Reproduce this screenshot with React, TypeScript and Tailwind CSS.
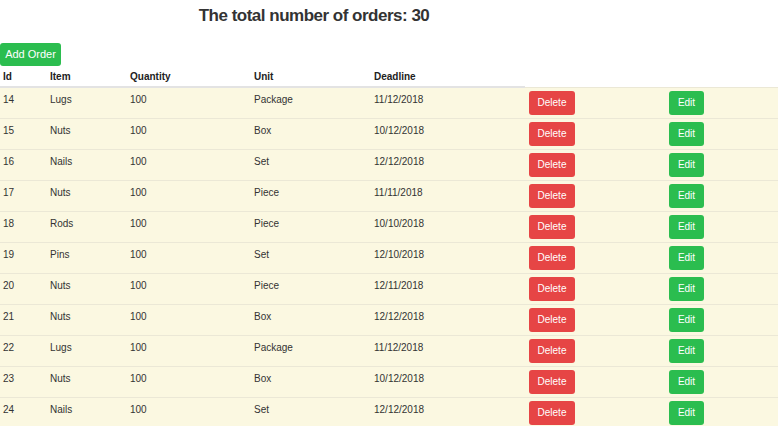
import React from "react";

const orders = [
  { id: 14, item: "Lugs", qty: 100, unit: "Package", deadline: "11/12/2018" },
  { id: 15, item: "Nuts", qty: 100, unit: "Box", deadline: "10/12/2018" },
  { id: 16, item: "Nails", qty: 100, unit: "Set", deadline: "12/12/2018" },
  { id: 17, item: "Nuts", qty: 100, unit: "Piece", deadline: "11/11/2018" },
  { id: 18, item: "Rods", qty: 100, unit: "Piece", deadline: "10/10/2018" },
  { id: 19, item: "Pins", qty: 100, unit: "Set", deadline: "12/10/2018" },
  { id: 20, item: "Nuts", qty: 100, unit: "Piece", deadline: "12/11/2018" },
  { id: 21, item: "Nuts", qty: 100, unit: "Box", deadline: "12/12/2018" },
  { id: 22, item: "Lugs", qty: 100, unit: "Package", deadline: "11/12/2018" },
  { id: 23, item: "Nuts", qty: 100, unit: "Box", deadline: "10/12/2018" },
  { id: 24, item: "Nails", qty: 100, unit: "Set", deadline: "12/12/2018" },
];

export default function App() {
  return (
    <div className="min-h-screen w-[778px] overflow-hidden bg-white font-['Liberation_Sans',Arial,sans-serif] text-[#333]">
      <div className="flex w-[628px] justify-center pt-[5px]">
        <h1 className="text-[17px] leading-[22px] font-bold tracking-[-0.5px] text-[#333]">
          The total number of orders: 30
        </h1>
      </div>

      <button className="mt-[16px] block h-[23px] w-[61px] rounded-[3px] bg-[#2bbd4f] text-[11px] text-white">
        Add Order
      </button>

      <table className="w-[778px] table-fixed border-collapse text-[10px]">
        <colgroup>
          <col className="w-[47px]" />
          <col className="w-[80px]" />
          <col className="w-[124px]" />
          <col className="w-[120px]" />
          <col className="w-[154px]" />
          <col className="w-[140px]" />
          <col />
        </colgroup>
        <thead>
          <tr>
            {["Id", "Item", "Quantity", "Unit", "Deadline"].map((h) => (
              <th
                key={h}
                className="h-[21px] border-b-2 border-[#e3e3e3] pl-[3px] text-left align-middle font-bold text-[#222]"
              >
                {h}
              </th>
            ))}
            <th className="border-b-0" />
            <th />
          </tr>
        </thead>
        <tbody>
          {orders.map((o) => (
            <tr key={o.id} className="bg-[#fbf8e1]">
              <td className="border-t border-[#ebe8d6] pl-[3px] pt-[5px] align-top leading-[14px]">{o.id}</td>
              <td className="border-t border-[#ebe8d6] pl-[3px] pt-[5px] align-top leading-[14px]">{o.item}</td>
              <td className="border-t border-[#ebe8d6] pl-[3px] pt-[5px] align-top leading-[14px]">{o.qty}</td>
              <td className="border-t border-[#ebe8d6] pl-[3px] pt-[5px] align-top leading-[14px]">{o.unit}</td>
              <td className="border-t border-[#ebe8d6] pl-[3px] pt-[5px] align-top leading-[14px]">{o.deadline}</td>
              <td className="border-t border-[#ebe8d6] pl-[4px] pt-[3px] pb-[3px] align-top">
                <button className="block h-[24px] w-[46px] rounded-[3px] bg-[#e64545] text-[10px] text-white">
                  Delete
                </button>
              </td>
              <td className="border-t border-[#ebe8d6] pl-[4px] pt-[3px] pb-[3px] align-top">
                <button className="block h-[24px] w-[35px] rounded-[3px] bg-[#2bbd4f] text-[10px] text-white">
                  Edit
                </button>
              </td>
            </tr>
          ))}
        </tbody>
      </table>
    </div>
  );
}
